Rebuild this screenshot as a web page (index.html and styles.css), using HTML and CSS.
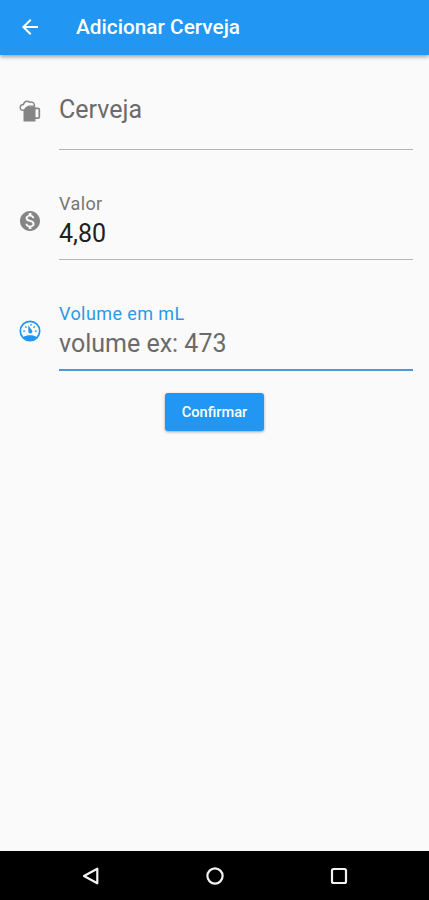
FILE: index.html
```html
<!DOCTYPE html>
<html lang="pt-BR">
<head>
    <meta charset="UTF-8">
    <meta name="viewport" content="width=device-width, initial-scale=1">
    <title>Adicionar Cerveja</title>
    <link rel="stylesheet" href="styles.css">
</head>
<body>
    <header class="app-bar">
        <svg class="back" viewBox="0 0 24 24"><path d="M20 11H7.83l5.59-5.59L12 4l-8 8 8 8 1.41-1.41L7.83 13H20v-2z"/></svg>
        <h1>Adicionar Cerveja</h1>
    </header>

    <form class="beer-form">
        <div class="row">
            <!-- beer mug -->
            <svg class="icon" viewBox="0 0 24 24">
                <path d="M5.500 7.500H17.500V22.500H5.500z"/>
                <path d="M17 9.300h3c.8 0 1.300.5 1.300 1.300v7.300c0 .8-.5 1.300-1.300 1.300h-3" fill="none" stroke="currentColor" stroke-width="1.700"/>
                <path class="foam" d="M5.500 11.300C3.200 11.500 2 10 2.200 8.300c.1-1.600 1.400-2.700 3.100-2.800C5.900 3.300 7.300 2.200 9 2.200c1.100 0 2 .4 2.800 1.100 2.200-.9 4.300.4 4.600 2.500.1.500 0 .900-.1 1.300h-5c-1.300 0-1.600 1-2.600 1.300-1.500.400-1.400 2.700-3.200 2.900z"/>
            </svg>
            <div class="field">
                <input class="name" type="text" placeholder="Cerveja" aria-label="Cerveja">
            </div>
        </div>
        <div class="row">
            <!-- coin -->
            <svg class="icon" viewBox="0 0 24 24">
                <path d="M12 2C6.48 2 2 6.48 2 12s4.48 10 10 10 10-4.48 10-10S17.52 2 12 2zm1.41 16.09V20h-2.67v-1.93c-1.71-.36-3.16-1.46-3.27-3.4h1.96c.1 1.05.82 1.87 2.65 1.87 1.96 0 2.4-.98 2.4-1.59 0-.83-.44-1.61-2.67-2.14-2.48-.6-4.18-1.62-4.18-3.67 0-1.72 1.39-2.84 3.11-3.21V4h2.67v1.95c1.86.45 2.79 1.86 2.85 3.39H14.3c-.05-1.11-.64-1.87-2.22-1.87-1.5 0-2.4.68-2.4 1.64 0 .84.65 1.39 2.67 1.91s4.18 1.39 4.18 3.91c-.01 1.83-1.38 2.83-3.12 3.16z"/>
            </svg>
            <div class="field">
                <label for="valor">Valor</label>
                <input id="valor" type="text" value="4,80">
            </div>
        </div>
        <div class="row active">
            <!-- gauge -->
            <svg class="icon" viewBox="0 0 24 24">
                <circle cx="12" cy="12" r="9.700" fill="none" stroke="currentColor" stroke-width="1.700"/>
                <path d="M5 18.200c2-1.300 4.400-1.900 7-1.900s5 .6 7 1.900C17.300 20.500 15 21.700 12 21.700s-5.300-1.200-7-3.500z"/>
                <path d="M10.100 6.200l3.700 4.900a2 2 0 1 1-3.400 1.700z"/>
                <path d="M5.200 12.200h2M16.800 12.200h2M7.200 7.400l1.300 1.300M16.800 7.400l-1.300 1.300M13 5v1.700" fill="none" stroke="currentColor" stroke-width="1.300"/>
            </svg>
            <div class="field">
                <label for="volume">Volume em mL</label>
                <input id="volume" type="text" placeholder="volume ex: 473">
            </div>
        </div>
        <button type="button">Confirmar</button>
    </form>

    <nav class="system-bar">
        <svg viewBox="0 0 24 24"><path d="M18.300 4.700v14.600L5 12z"/></svg>
        <svg viewBox="0 0 24 24"><circle cx="12" cy="12" r="7.600"/></svg>
        <svg viewBox="0 0 24 24"><rect x="5" y="5" width="14" height="14" rx="1.500"/></svg>
    </nav>
</body>
</html>
```
FILE: styles.css
```css
* { box-sizing: border-box; }
body {
    margin: 0;
    height: 900px;
    display: flex;
    flex-direction: column;
    background: #fafafa;
    font-family: Roboto, sans-serif;
}
.app-bar {
    height: 55px;
    display: flex;
    align-items: center;
    gap: 34px;
    padding: 0 18px 2px;
    background: #2196f3;
    color: white;
    box-shadow: 0 2px 4px rgba(0,0,0,0.35);
}
.back { width: 24px; height: 24px; fill: currentColor; }
h1 { margin: 0; font-size: 20.8px; font-weight: 500; }
.beer-form {
    flex: 1;
    display: flex;
    flex-direction: column;
    padding: 16px 16px 0 18px;
}
.row {
    height: 79px;
    margin-bottom: 31px;
    display: flex;
    align-items: center;
    gap: 17px;
    color: #858585;
}
.icon { width: 24px; height: 24px; fill: currentColor; }
.foam { fill: #fafafa; stroke: currentColor; stroke-width: 1.4; }
.field {
    flex: 1;
    height: 79px;
    padding-top: 12px;
    border-bottom: 1px solid #b5b5b5;
}
label {
    display: block;
    height: 22px;
    line-height: 22px;
    font-size: 18px;
    letter-spacing: 0.4px;
    color: #757575;
}
input {
    display: block;
    width: 100%;
    height: 36px;
    padding: 0;
    border: none;
    outline: none;
    background: none;
    font-family: inherit;
    font-size: 25px;
    color: #212121;
}
input::placeholder { color: #6b6b6b; opacity: 1; }
.name { margin-top: 8px; }
.active {
    height: 80px;
    margin-bottom: 22px;
    color: #2196f3;
}
.active .field { height: 80px; border-bottom: 2px solid #4a98e2; }
.active label { color: #2b99e8; }
button {
    align-self: center;
    width: 99px;
    height: 38px;
    margin-right: 2px;
    padding: 0;
    border: none;
    border-radius: 3px;
    background: #2196f3;
    color: white;
    font-family: inherit;
    font-size: 14.6px;
    font-weight: 500;
    box-shadow: 0 1px 3px rgba(0,0,0,0.35);
}
.system-bar {
    height: 49px;
    display: flex;
    align-items: center;
    justify-content: center;
    gap: 100px;
    background: black;
}
.system-bar svg {
    width: 24px;
    height: 24px;
    fill: none;
    stroke: #f2f2f2;
    stroke-width: 2.2;
    stroke-linejoin: round;
}
```
